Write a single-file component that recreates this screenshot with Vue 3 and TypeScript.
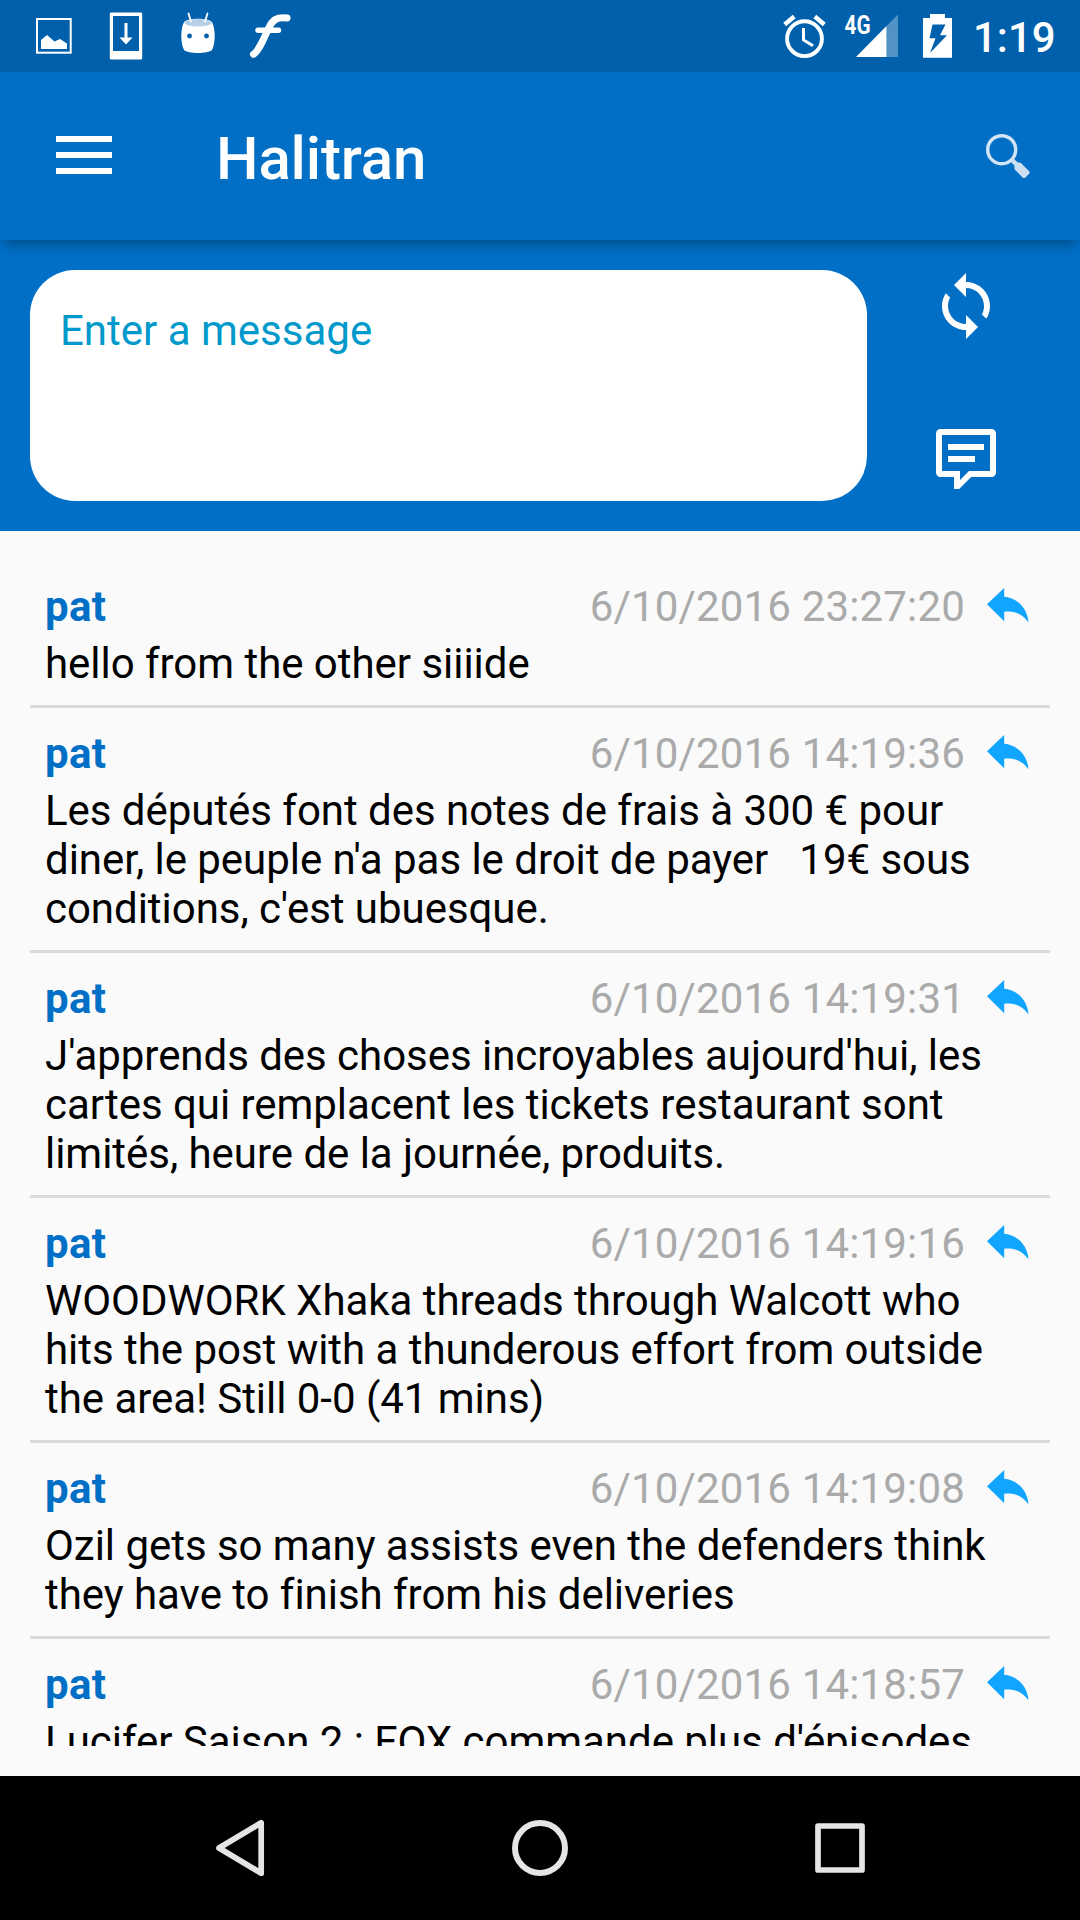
<script setup lang="ts">
interface Message {
  author: string
  date: string
  text: string
}

const messages: Message[] = [
  { author: 'pat', date: '6/10/2016 23:27:20', text: 'hello from the other siiiide' },
  {
    author: 'pat',
    date: '6/10/2016 14:19:36',
    text: "Les députés font des notes de frais à 300 € pour\ndiner, le peuple n'a pas le droit de payer   19€ sous\nconditions, c'est ubuesque.",
  },
  {
    author: 'pat',
    date: '6/10/2016 14:19:31',
    text: "J'apprends des choses incroyables aujourd'hui, les\ncartes qui remplacent les tickets restaurant sont\nlimités, heure de la journée, produits.",
  },
  {
    author: 'pat',
    date: '6/10/2016 14:19:16',
    text: 'WOODWORK Xhaka threads through Walcott who\nhits the post with a thunderous effort from outside\nthe area! Still 0-0 (41 mins)',
  },
  {
    author: 'pat',
    date: '6/10/2016 14:19:08',
    text: 'Ozil gets so many assists even the defenders think\nthey have to finish from his deliveries',
  },
  { author: 'pat', date: '6/10/2016 14:18:57', text: "Lucifer Saison 2 : FOX commande plus d'épisodes" },
]
</script>

<template>
  <div class="screen">
    <div class="status">
      <svg width="90" height="72" viewBox="0 0 90 72">
        <rect x="37" y="19" width="33.700" height="33.700" fill="none" stroke="#fff" stroke-width="2" />
        <path d="M41 49V40l6-5 7.500 6.500 5.500-2.500 7 4.500V49z" fill="#fff" />
      </svg>
      <svg width="70" height="72" viewBox="90 0 70 72">
        <path fill="#fff" fill-rule="evenodd" d="M111 12.500h30a1.200 1.200 0 0 1 1.200 1.200v44.600a1.200 1.200 0 0 1-1.200 1.200h-30a1.200 1.200 0 0 1-1.200-1.200V13.700a1.200 1.200 0 0 1 1.200-1.200zM113 16v35h26V16z" />
        <path fill="#fff" d="M124.500 23h3v14.500h5l-6.500 7-6.500-7h5z" />
      </svg>
      <svg width="70" height="72" viewBox="160 0 70 72">
        <path fill="#fff" d="M184 22c4-4.200 24-4.200 28 0 3.600 7 3.600 21 0 28-4 4-24 4-28 0-3.600-7-3.600-21 0-28z" />
        <ellipse cx="198" cy="22.800" rx="13.500" ry="3.800" fill="#b5d0e7" />
        <path d="M188.500 13.500l2.500 8M207.500 13.500l-2.500 8" stroke="#fff" stroke-width="1.800" stroke-linecap="round" />
        <circle cx="189.500" cy="36" r="2.400" fill="#0060ab" />
        <circle cx="206.500" cy="36" r="2.400" fill="#0060ab" />
      </svg>
      <svg width="70" height="72" viewBox="230 0 70 72">
        <path d="M253.500 54.200C259 51 264 38 269 27.500 272.500 20 277 16.500 287 18" fill="none" stroke="#fff" stroke-width="7" stroke-linecap="round" />
        <path d="M258 30.300h20.500" stroke="#fff" stroke-width="5.400" stroke-linecap="round" />
      </svg>

      <div class="status-right">
        <svg width="50" height="72" viewBox="780 0 50 72">
          <circle cx="804.500" cy="38.700" r="17.400" fill="none" stroke="#fff" stroke-width="3.900" />
          <path d="M803.500 28v12l9.500 5.700" fill="none" stroke="#fff" stroke-width="3" />
          <path d="M784.700 24.500l9.500-8M824.300 24.500l-9.500-8" stroke="#fff" stroke-width="4.500" />
        </svg>
        <svg width="75" height="72" viewBox="830 0 75 72">
          <path d="M856 57l30.500-31V57z" fill="#fff" />
          <path d="M886.500 26L898 14.500V57h-11.500z" fill="#fff" opacity=".32" />
          <text class="network" x="844.500" y="33.700" textLength="26" lengthAdjust="spacingAndGlyphs">4G</text>
        </svg>
        <svg width="60" height="72" viewBox="905 0 60 72">
          <path fill="#fff" fill-rule="evenodd" d="M930 14h15v4h7v39.700h-29V18h7zM932.500 24.500L929.500 38.300h6L930 53l17-17.700h-7l5.500-10.800z" />
        </svg>
        <span class="clock">1:19</span>
      </div>
    </div>

    <header class="toolbar">
      <div class="burger"><i /><i /><i /></div>
      <h1 class="title">Halitran</h1>
      <svg class="search" width="48" height="48" viewBox="984 132 48 48">
        <circle cx="1001.700" cy="149.700" r="14" fill="none" stroke="#d3e5f4" stroke-width="3.400" />
        <path d="M1012 160l5 5" stroke="#cce0f2" stroke-width="4.500" />
        <path d="M1016.500 164.500h3l8 8-3.500 3.500-7.500-7.500z" fill="#cce0f2" stroke="#cce0f2" stroke-width="4" stroke-linejoin="round" />
      </svg>
    </header>

    <section class="compose">
      <div class="field">Enter a message</div>
      <div class="actions">
        <svg width="72" height="72" viewBox="0 0 24 24" fill="#fff">
          <path d="M12 4V1L8 5l4 4V6c3.310 0 6 2.690 6 6 0 1.010-.25 1.970-.7 2.800l1.460 1.460C19.540 15.030 20 13.570 20 12c0-4.420-3.580-8-8-8zm0 14c-3.310 0-6-2.690-6-6 0-1.010.25-1.970.7-2.800L5.240 7.740C4.460 8.970 4 10.430 4 12c0 4.420 3.580 8 8 8v3l4-4-4-4v3z" />
        </svg>
        <svg width="72" height="72" viewBox="0 0 24 24" fill="#fff" fill-rule="evenodd">
          <path d="M3.500 2h17A1.500 1.500 0 0 1 22 3.500v13a1.500 1.500 0 0 1-1.500 1.500h-6.800l-4 4H8v-4H3.500A1.500 1.500 0 0 1 2 16.500v-13A1.500 1.500 0 0 1 3.500 2zM4 4v12h6v3l3-3h7V4zM6 7h12v2H6zM6 11h9v2H6z" />
        </svg>
      </div>
    </section>

    <main class="list">
      <article v-for="m in messages" :key="m.date" class="item">
        <div class="head">
          <span class="author">{{ m.author }}</span>
          <span class="date">{{ m.date }}</span>
          <svg class="reply" width="45" height="37" viewBox="985 587 45 37">
            <path fill="#12a5ff" d="M987 604.300L1004.200 588v8.800C1017 598 1027.500 608 1028.500 622.300 1021 612.500 1014 611.200 1004.200 611.700V621.300z" />
          </svg>
        </div>
        <p class="text">{{ m.text }}</p>
      </article>
    </main>

    <nav class="navbar">
      <svg width="56" height="64" viewBox="212 1816 56 64">
        <path d="M219 1848l42.200-25.200v50.400z" fill="none" stroke="#e5e5e5" stroke-width="5.700" stroke-linejoin="round" />
      </svg>
      <svg width="64" height="64" viewBox="508 1816 64 64">
        <circle cx="540" cy="1848" r="25" fill="none" stroke="#e5e5e5" stroke-width="6" />
      </svg>
      <svg width="56" height="64" viewBox="812 1816 56 64">
        <rect x="818" y="1826" width="44" height="44" fill="none" stroke="#e5e5e5" stroke-width="5.700" stroke-linejoin="round" />
      </svg>
    </nav>
  </div>
</template>

<style>
body {
  margin: 0;
  background: #fafafa;
}
</style>

<style scoped>
.screen {
  width: 1080px;
  height: 1920px;
  display: flex;
  flex-direction: column;
  overflow: hidden;
  background: #fafafa;
  color: #000;
  font-family: Roboto, "Liberation Sans", sans-serif;
  font-size: 42px;
  line-height: 49px;
}
svg {
  display: block;
  flex: none;
}
.status {
  flex: none;
  height: 72px;
  display: flex;
  background: #0060ab;
}
.status-right {
  margin-left: auto;
  width: 300px;
  display: flex;
}
.network {
  font-size: 26px;
  font-weight: 700;
  fill: #fff;
}
.clock {
  padding: 13px 0 0 8px;
  color: #fff;
  font-weight: 500;
}
.toolbar {
  flex: none;
  height: 168px;
  box-sizing: border-box;
  display: flex;
  align-items: center;
  padding: 0 48px 0 56px;
  background: #006fc5;
  box-shadow: 0 8px 12px -4px rgba(0, 0, 0, 0.32);
  z-index: 1;
}
.burger {
  width: 56px;
  display: grid;
  gap: 10px;
  margin-bottom: 2px;
}
.burger i {
  height: 6px;
  background: #fff;
}
.title {
  margin: 6px 0 0 104px;
  font-size: 60px;
  line-height: 70px;
  font-weight: 500;
  letter-spacing: -0.15px;
  color: #fff;
}
.search {
  margin-left: auto;
}
.compose {
  flex: none;
  height: 291px;
  box-sizing: border-box;
  display: flex;
  padding: 30px 78px 30px 30px;
  background: #006fc5;
}
.field {
  width: 837px;
  box-sizing: border-box;
  padding: 36px 30px;
  border-radius: 45px;
  background: #fff;
  color: #0099cc;
}
.actions {
  margin-left: auto;
  display: flex;
  flex-direction: column;
  justify-content: space-between;
  height: 225px;
}
.list {
  flex: none;
  height: 1185px;
  margin: 30px;
  overflow: hidden;
}
.item {
  padding: 21px 15px 17px;
  border-bottom: 3px solid #dadada;
}
.head {
  display: flex;
  height: 49px;
  margin-bottom: 8px;
}
.author {
  font-weight: 700;
  letter-spacing: 0.3px;
  color: #006fc5;
}
.date {
  margin-left: auto;
  letter-spacing: 0.17px;
  color: #aaa;
}
.reply {
  margin: 5px 5px 0 20px;
}
.text {
  margin: 0;
  white-space: pre;
  letter-spacing: -0.035px;
}
.navbar {
  flex: none;
  height: 144px;
  box-sizing: border-box;
  display: flex;
  align-items: center;
  justify-content: space-between;
  padding: 0 212px;
  background: #000;
}
</style>
